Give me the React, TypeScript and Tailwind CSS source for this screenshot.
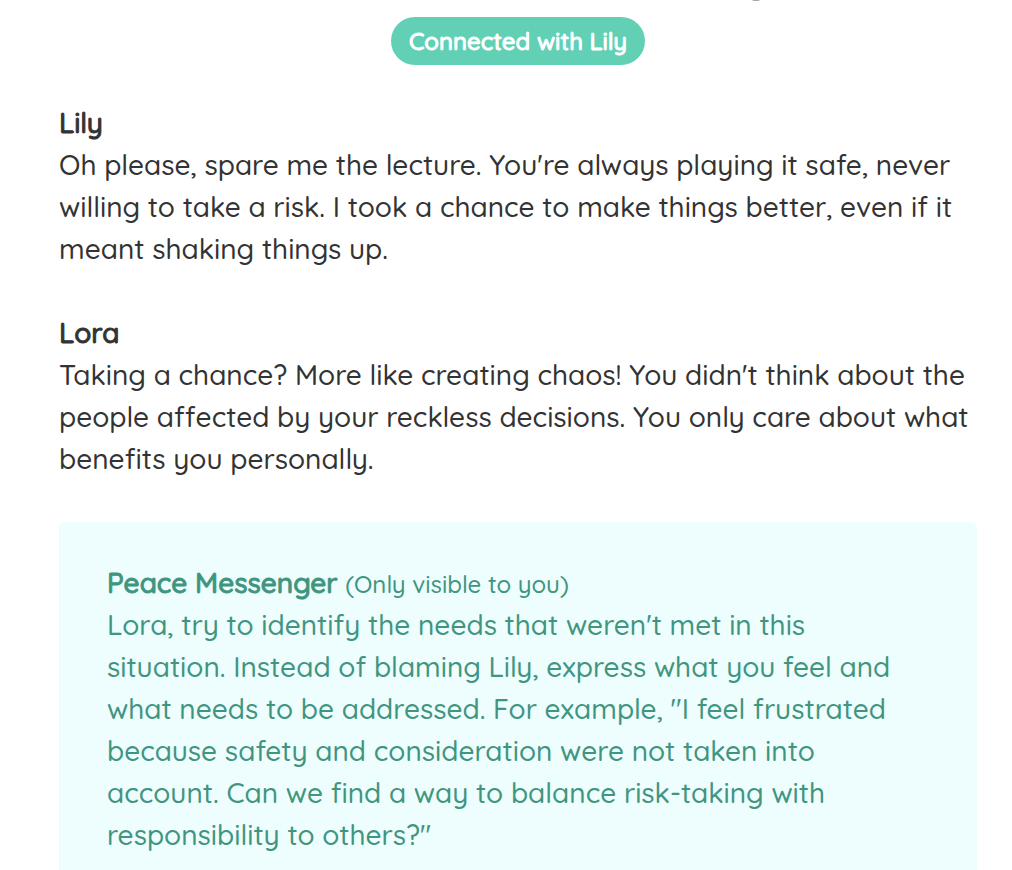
type Message = { id: string; author: string; text: string };

const messages: Message[] = [
  {
    id: "lily-1",
    author: "Lily",
    text: "Oh please, spare me the lecture. You're always playing it safe, never willing to take a risk. I took a chance to make things better, even if it meant shaking things up.",
  },
  {
    id: "lora-1",
    author: "Lora",
    text: "Taking a chance? More like creating chaos! You didn't think about the people affected by your reckless decisions. You only care about what benefits you personally.",
  },
];

export default function App() {
  return (
    <div className="h-screen overflow-hidden bg-white font-[Quicksand,Lato,sans-serif] text-[28px] leading-[42px] font-medium text-[#333333] antialiased">
      <header className="flex flex-col items-center pl-6">
        <svg className="mr-[248px] h-[2px] w-4 self-end" viewBox="0 0 16 2" aria-hidden="true">
          <path d="M1 -2Q8 1.2 15 -2" fill="none" stroke="#555555" strokeWidth="2" />
        </svg>
        <span className="mt-[15px] rounded-full bg-[#61d0b5] px-[18px] text-[24px] leading-[48px] text-white [-webkit-text-stroke:1px]">
          Connected with Lily
        </span>
      </header>
      <main className="flex flex-col gap-[42px] pt-[37px] pr-[35px] pl-[59px]">
        {messages.map((m) => (
          <article key={m.id}>
            <h2 className="[-webkit-text-stroke:1px]">{m.author}</h2>
            <p>{m.text}</p>
          </article>
        ))}
        <aside className="rounded-md bg-[#eefdfd] px-12 pt-10 pb-20 text-[#40957f]">
          <h2>
            <span className="[-webkit-text-stroke:1px]">Peace Messenger</span>{" "}
            <small className="text-[24px] leading-none">(Only visible to you)</small>
          </h2>
          <p>
            Lora, try to identify the needs that weren't met in this situation. Instead of blaming Lily, express what
            you feel and what needs to be addressed. For example, "I feel frustrated because safety and consideration
            were not taken into account. Can we find a way to balance risk-taking with responsibility to others?"
          </p>
        </aside>
      </main>
    </div>
  );
}
